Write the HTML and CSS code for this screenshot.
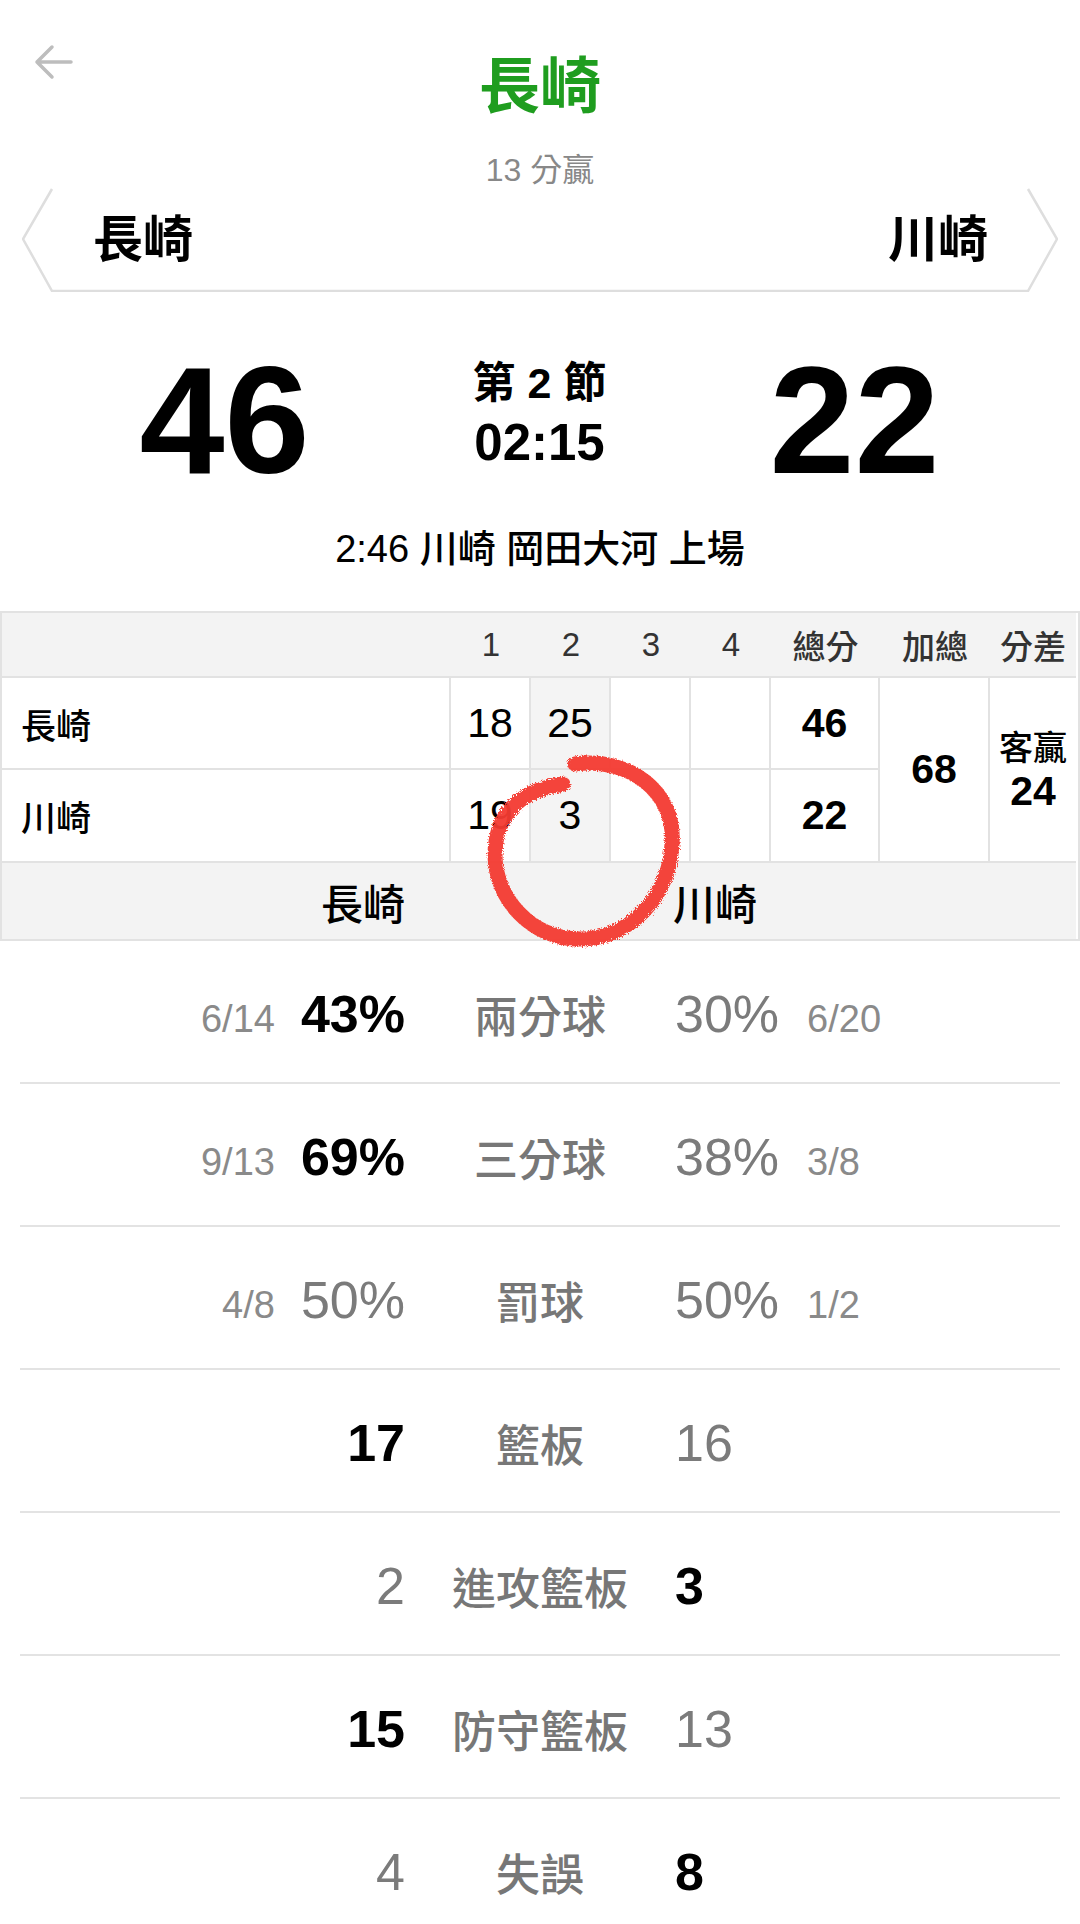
FILE: index.html
```html
<!DOCTYPE html>
<html lang="zh-Hant">
<head>
<meta charset="utf-8">
<title>長崎 vs 川崎</title>
<link rel="stylesheet" href="styles.css">
</head>
<body>
<div class="page">
  <header class="topbar">
    <div class="back">
      <svg viewBox="0 0 40 36" aria-hidden="true"><path d="M38 18 H4 M19 3 L4 18 L19 33" fill="none" stroke="#bdbdbd" stroke-width="3.5" stroke-linecap="round" stroke-linejoin="round"/></svg>
    </div>
    <h1 class="title">長崎</h1>
    <div></div>
  </header>
  <div class="margin">13 分贏</div>

  <div class="tabs">
    <svg class="tab-outline" viewBox="0 0 1036 104" preserveAspectRatio="none" aria-hidden="true">
      <path d="M30 1 L1 51 L30 103 L1006 103 L1035 51 L1006 1" fill="none" stroke="#dedede" stroke-width="2.5" stroke-linejoin="miter"/>
    </svg>
    <span class="tab-name">長崎</span>
    <span class="tab-name">川崎</span>
  </div>

  <section class="scoreboard">
    <div class="big">46</div>
    <div class="period">
      <div class="q">第 2 節</div>
      <div class="clock">02:15</div>
    </div>
    <div class="big">22</div>
  </section>

  <p class="event">2:46 川崎 岡田大河 上場</p>

  <div class="box">
    <div class="c h"></div>
    <div class="c h">1</div>
    <div class="c h">2</div>
    <div class="c h">3</div>
    <div class="c h">4</div>
    <div class="c h">總分</div>
    <div class="c h">加總</div>
    <div class="c h">分差</div>

    <div class="c name">長崎</div>
    <div class="c num">18</div>
    <div class="c num cur">25</div>
    <div class="c num"></div>
    <div class="c num"></div>
    <div class="c num bold">46</div>
    <div class="c num bold span2">68</div>
    <div class="c diff span2"><span class="diff-t">客贏</span><span class="diff-n">24</span></div>

    <div class="c name">川崎</div>
    <div class="c num">19</div>
    <div class="c num cur">3</div>
    <div class="c num"></div>
    <div class="c num"></div>
    <div class="c num bold">22</div>

    <div class="teams"><span>長崎</span><span>川崎</span></div>
  </div>

  <div class="stats">
    <div class="stat">
      <div class="side l"><span class="frac">6/14</span><span class="val win">43%</span></div>
      <div class="label">兩分球</div>
      <div class="side r"><span class="val">30%</span><span class="frac">6/20</span></div>
    </div>
    <div class="stat">
      <div class="side l"><span class="frac">9/13</span><span class="val win">69%</span></div>
      <div class="label">三分球</div>
      <div class="side r"><span class="val">38%</span><span class="frac">3/8</span></div>
    </div>
    <div class="stat">
      <div class="side l"><span class="frac">4/8</span><span class="val">50%</span></div>
      <div class="label">罰球</div>
      <div class="side r"><span class="val">50%</span><span class="frac">1/2</span></div>
    </div>
    <div class="stat">
      <div class="side l"><span class="val win">17</span></div>
      <div class="label">籃板</div>
      <div class="side r"><span class="val">16</span></div>
    </div>
    <div class="stat">
      <div class="side l"><span class="val">2</span></div>
      <div class="label">進攻籃板</div>
      <div class="side r"><span class="val win">3</span></div>
    </div>
    <div class="stat">
      <div class="side l"><span class="val win">15</span></div>
      <div class="label">防守籃板</div>
      <div class="side r"><span class="val">13</span></div>
    </div>
    <div class="stat">
      <div class="side l"><span class="val">4</span></div>
      <div class="label">失誤</div>
      <div class="side r"><span class="val win">8</span></div>
    </div>
  </div>

  <svg class="annotation" viewBox="0 0 210 210" aria-hidden="true">
    <defs>
      <filter id="rough" x="-10%" y="-10%" width="120%" height="120%">
        <feTurbulence type="fractalNoise" baseFrequency="0.8" numOctaves="2" result="n"/>
        <feDisplacementMap in="SourceGraphic" in2="n" scale="6"/>
      </filter>
    </defs>
    <path d="M95 17 C150 10 196 45 192 97 C189 150 150 192 100 192 C50 192 15 150 15 108 C15 68 38 44 83 37" fill="none" stroke="#f43b30" stroke-width="15" stroke-linecap="round" filter="url(#rough)" opacity="0.95"/>
  </svg>
</div>
</body>
</html>
```

FILE: styles.css
```css
body {
  margin: 0;
  background: #fff;
  color: #000;
  font-family: "Liberation Sans", "Noto Sans CJK TC", sans-serif;
}

.page {
  position: relative;
  width: 1080px;
  height: 1924px;
  overflow: hidden;
}

/* header */
.topbar {
  display: grid;
  grid-template-columns: 1fr auto 1fr;
  align-items: start;
}

.back {
  padding: 44px 0 0 33px;
}

.back svg {
  display: block;
  width: 40px;
  height: 36px;
}

.title {
  margin: 57px 0 0;
  font-size: 61px;
  line-height: 60px;
  font-weight: 700;
  color: #1f9d1f;
}

.margin {
  margin-top: 37px;
  text-align: center;
  font-size: 32px;
  line-height: 32px;
  color: #888;
}

/* team tabs */
.tabs {
  position: relative;
  margin: 2px 22px 0;
  height: 104px;
  padding: 0 70px 0 71px;
  display: flex;
  justify-content: space-between;
  align-items: center;
}

.tab-outline {
  position: absolute;
  left: 0;
  top: 0;
  width: 100%;
  height: 100%;
}

.tab-name {
  position: relative;
  font-size: 50px;
  line-height: 50px;
  font-weight: 700;
}

/* scoreboard */
.scoreboard {
  margin-top: 52px;
  padding: 0 67px;
  display: grid;
  grid-template-columns: 315px 315px 315px;
  justify-items: center;
  align-items: start;
}

.big {
  font-size: 153px;
  line-height: 152px;
  font-weight: 700;
}

.period {
  margin-top: 17px;
  text-align: center;
}

.q {
  font-size: 43px;
  line-height: 44px;
  font-weight: 700;
}

.clock {
  margin-top: 12px;
  font-size: 51px;
  line-height: 51px;
  font-weight: 700;
}

.event {
  margin: 34px 0 0;
  text-align: center;
  font-size: 38px;
  line-height: 38px;
  font-weight: 500;
}

/* box score */
.box {
  margin-top: 43px;
  border: 2px solid #e2e2e2;
  display: grid;
  grid-template-columns: 449px 80px 80px 80px 80px 109px 110px 86px;
  grid-template-rows: 65px 92px 93px 76px;
}

.c {
  box-sizing: border-box;
  display: flex;
  align-items: center;
  justify-content: center;
  border-right: 2px solid #e2e2e2;
  border-bottom: 2px solid #e2e2e2;
}

.c.h {
  background: #f3f3f3;
  border-right: 0;
  font-size: 33px;
  color: #333;
  font-weight: 500;
}

.c.name {
  justify-content: flex-start;
  padding-left: 19px;
  font-size: 35px;
  font-weight: 500;
}

.c.num {
  font-size: 41px;
}

.c.cur {
  background: #f4f4f4;
}

.bold {
  font-weight: 700;
}

.span2 {
  grid-row: span 2;
}

.c.diff {
  flex-direction: column;
  border-right: 0;
}

.diff-t {
  font-size: 34px;
  line-height: 42px;
  font-weight: 500;
}

.diff-n {
  font-size: 41px;
  line-height: 44px;
  font-weight: 700;
}

.teams {
  grid-column: 1 / -1;
  background: #f3f3f3;
  display: flex;
  justify-content: center;
  align-items: center;
  gap: 268px;
  font-size: 42px;
  font-weight: 500;
}

/* stats */
.stats {
  margin: 0 20px;
}

.stat {
  box-sizing: border-box;
  height: 143px;
  padding-top: 4px;
  border-bottom: 2px solid #e3e3e3;
  display: grid;
  grid-template-columns: 1fr 270px 1fr;
  align-items: center;
}

.side {
  display: flex;
  align-items: baseline;
}

.side.l {
  justify-content: flex-end;
  gap: 26px;
}

.side.r {
  justify-content: flex-start;
  gap: 28px;
}

.frac {
  font-size: 38px;
  color: #8a8a8a;
}

.val {
  font-size: 52px;
  color: #7b7b7b;
}

.val.win {
  color: #000;
  font-weight: 700;
}

.label {
  text-align: center;
  font-size: 44px;
  color: #777;
  font-weight: 500;
}

/* hand-drawn annotation */
.annotation {
  position: absolute;
  left: 480px;
  top: 747px;
  width: 210px;
  height: 210px;
  pointer-events: none;
}
```
